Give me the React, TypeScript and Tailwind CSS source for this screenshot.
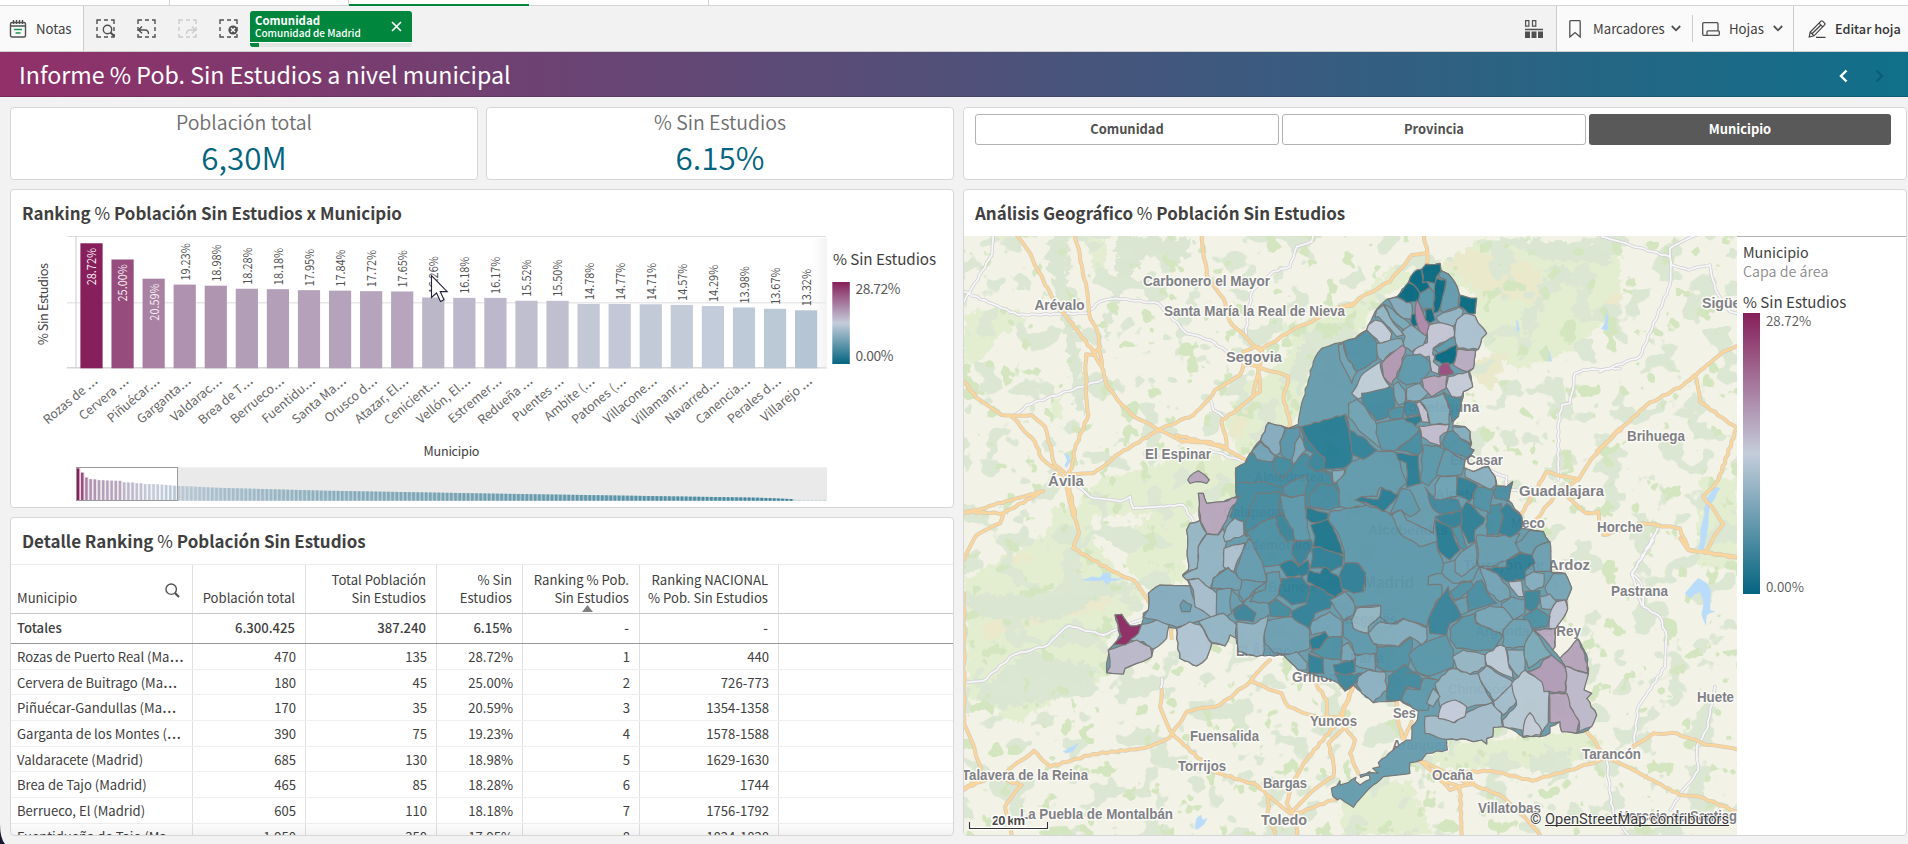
import React from "react";

const SANS = "font-['Noto_Sans_CJK_SC','Open_Sans',sans-serif]";

/* ---------- shared helpers ---------- */

function Label({ text }: { text: string }) {
  const cut = text.endsWith("…");
  return (
    <>
      {cut ? text.slice(0, -1) : text}
      {cut && <span className="font-['Open_Sans'] text-[1.42em] leading-none">…</span>}
    </>
  );
}

const mix = (a: number[], b: number[], t: number) =>
  `rgb(${a.map((v, i) => Math.round(v + (b[i] - v) * t)).join(",")})`;
const LOW = [4, 100, 128];
const MID = [196, 205, 218];
const HIGH = [134, 31, 91];
const scale = (v: number) =>
  v < 14.36 ? mix(LOW, MID, v / 14.36) : mix(MID, HIGH, (v - 14.36) / 14.36);

/* ---------- toolbar ---------- */

const DASH = "M1 5V1h4M8 1h4M15 1h3v4M18 8v4M18 15v3h-3M12 18H8M5 18H1v-3M1 12V8";

function SelIcon({ color, children }: { color: string; children: React.ReactNode }) {
  return (
    <svg width="19" height="19" viewBox="0 0 19 19" fill="none" stroke={color} strokeWidth="1.4">
      <path d={DASH} />
      {children}
    </svg>
  );
}

function Toolbar() {
  return (
    <div className="flex h-[46px] border-b border-[#cfcfcf] bg-[#f2f2f2] text-[13.2px] text-[#404040]">
      <div className="flex w-[84px] items-center border-r border-[#cccccc] bg-[#fafafa] pl-[9px]">
        <svg width="18" height="18" viewBox="0 0 18 18" fill="none" stroke="#505050" strokeWidth="1.4">
          <rect x="1.5" y="2.5" width="15" height="14.5" rx="1.5" />
          <path d="M1.5 6h15M4.5 0v4M7.5 0v4M10.5 0v4M13.5 0v4" />
          <path d="M5 9.5h8M6.500 13h5" stroke="#1a9550" />
        </svg>
        <span className="ml-[9px]">Notas</span>
      </div>
      <div className="flex items-center gap-[22px] pl-[12px]">
        <SelIcon color="#505050">
          <circle cx="11.500" cy="10.500" r="4.200" fill="#f2f2f2" />
          <path d="M14.500 13.500l4 4" strokeWidth="2" />
        </SelIcon>
        <SelIcon color="#505050">
          <path d="M5 7.500L1.500 11 5 14.200M2 11h6c2 0 3.500 1 3.500 4" fill="none" />
        </SelIcon>
        <SelIcon color="#cccccc">
          <path d="M14 7.500L17.500 11 14 14.200M17 11h-5c-2 0-3.500 1-3.500 4" fill="none" />
        </SelIcon>
        <SelIcon color="#505050">
          <circle cx="14" cy="11" r="4.600" fill="#505050" stroke="none" />
          <path d="M12 9l4 4M16 9l-4 4" stroke="#fff" />
        </SelIcon>
      </div>
      <div className="ml-[12px] mt-[5px] flex h-[36px] w-[162px] flex-col overflow-hidden rounded-[3px] bg-[#e2e6e3]">
        <div className="flex h-[31px] items-center justify-between bg-[#00873d] pl-[5px] pr-[10px] text-white">
          <div className="flex flex-col">
            <span className="h-[13px] text-[11.400px] font-bold leading-[13px]">Comunidad</span>
            <span className="h-[12px] text-[10px] font-medium leading-[12px]">Comunidad de Madrid</span>
          </div>
          <svg width="11" height="11" viewBox="0 0 11 11" stroke="#fff" strokeWidth="1.700">
            <path d="M1 1l9 9M10 1l-9 9" />
          </svg>
        </div>
        <div className="h-[1px] bg-white" />
        <div className="h-[4px] w-[9px] bg-[#00873d]" />
      </div>
      <div className="flex-1" />
      <div className="flex w-[31px] items-center">
        <svg width="18" height="18" viewBox="0 0 18 18" fill="#505050">
          <path d="M.6.600h3.300v5.600H.6zM7.500.600h3.300v5.600H7.500z" fill="none" stroke="#505050" strokeWidth="1.200" />
          <path d="M0 8.700h18v1.500H0zM0 11.500h5V18H0zM6.500 11.500h5V18h-5zM13 11.500h5V18h-5z" />
        </svg>
      </div>
      <div className="flex w-[237px] items-center border-l border-[#cccccc] bg-[#fafafa] pl-[12px]">
        <svg width="12" height="18" viewBox="0 0 12 18" fill="none" stroke="#505050" strokeWidth="1.300">
          <path d="M.8 1.500q0-.8.8-.8h8.800q.8 0 .8.800v15.500L6 12.500.8 17z" />
        </svg>
        <span className="ml-[12px] w-[67px]">Marcadores</span>
        <Chevron />
        <div className="ml-[11px] h-[27px] w-px bg-[#cccccc]" />
        <svg className="ml-[9px]" width="18" height="14" viewBox="0 0 18 14" fill="none" stroke="#505050" strokeWidth="1.300">
          <path d="M16 8.500V1.700q0-1-1-1H1.700q-1 0-1 1v10.600q0 1 1 1h12.500M5 13.300V10q0-1.200 1-1.200h10.300q1 0 1 1v2.500q0 1-1 1H5" />
        </svg>
        <span className="ml-[9px] w-[33px]">Hojas</span>
        <Chevron />
      </div>
      <div className="flex w-[115px] items-center border-l border-[#cccccc] bg-[#fafafa] pl-[14px] text-[#333]">
        <svg width="18" height="18" viewBox="0 0 18 18" fill="none" stroke="#404040" strokeWidth="1.200">
          <path d="M1.200 17l1-5L13 1.200q.8-.8 1.600 0l2 2q.8.800 0 1.600L6 15.800zM2.200 12L6 15.800M11 3.200l3.700 3.700M4 13.800L13 5M8 17.300h9.500" />
        </svg>
        <span className="ml-[9px] whitespace-nowrap text-[12.700px] font-medium">Editar hoja</span>
      </div>
    </div>
  );
}

function Chevron() {
  return (
    <svg className="ml-[11px]" width="10" height="7" viewBox="0 0 10 7" fill="none" stroke="#505050" strokeWidth="1.800">
      <path d="M.8 1L5 5.300 9.200 1" />
    </svg>
  );
}

/* ---------- cards ---------- */

function Card({ className = "", children }: { className?: string; children: React.ReactNode }) {
  return <div className={`overflow-hidden rounded-[4px] border border-[#d6d6d6] bg-white ${className}`}>{children}</div>;
}

function Kpi({ title, value }: { title: string; value: string }) {
  return (
    <Card className="flex w-[468px] flex-col items-center">
      <span className="mt-[2px] h-[24px] text-[19.500px] font-[350] leading-[24px] text-[#6e6e6e]">{title}</span>
      <span className="mt-[4px] h-[38px] text-[31.400px] font-[350] leading-[38px] text-[#046480]">{value}</span>
    </Card>
  );
}

function Title({ pre, post }: { pre: string; post: string }) {
  return (
    <h2 className="h-[46px] whitespace-pre pl-[11px] pt-[11px] text-[16.950px] font-bold leading-[24px] text-[#404040]">
      {pre}
      <span className="font-normal">%</span>
      {post}
    </h2>
  );
}

/* ---------- bar chart ---------- */

const BARS: [string, number][] = [
  ["Rozas de …", 28.72], ["Cervera …", 25.0], ["Piñuécar…", 20.59], ["Garganta…", 19.23],
  ["Valdarac…", 18.98], ["Brea de T…", 18.28], ["Berrueco…", 18.18], ["Fuentidu…", 17.95],
  ["Santa Ma…", 17.84], ["Orusco d…", 17.72], ["Atazar, El…", 17.65], ["Cenicient…", 16.26],
  ["Vellón, El…", 16.18], ["Estremer…", 16.17], ["Redueña …", 15.52], ["Puentes …", 15.5],
  ["Ambite (…", 14.78], ["Patones (…", 14.77], ["Villacone…", 14.71], ["Villamanr…", 14.57],
  ["Navarred…", 14.29], ["Canencia…", 13.98], ["Perales d…", 13.67], ["Villarejo …", 13.32],
];

const KNOTS = [[23, 13.3], [33, 11.5], [59, 8.9], [96, 6.5], [146, 3.6], [162, 2.7], [171, 1.3]];
const overview: number[] = Array.from({ length: 179 }, (_, i) => {
  if (i < BARS.length) return BARS[i][1];
  if (i > 170) return 0;
  const k = KNOTS.findIndex((n) => n[0] >= i);
  const [x0, y0] = KNOTS[k - 1];
  const [x1, y1] = KNOTS[k];
  return y0 + ((y1 - y0) * (i - x0)) / (x1 - x0);
});

function BarChart() {
  return (
    <svg width="941" height="271" viewBox="11 236 941 271" fill="#595959">
      <defs>
        <linearGradient id="scale" x1="0" y1="0" x2="0" y2="1">
          <stop offset="0" stopColor="#861f5b" />
          <stop offset=".5" stopColor="#c4cdda" />
          <stop offset="1" stopColor="#046480" />
        </linearGradient>
        <linearGradient id="edge">
          <stop offset="0" stopColor="#eee" stopOpacity="0" />
          <stop offset="1" stopColor="#eee" stopOpacity=".7" />
        </linearGradient>
      </defs>
      <rect x="67" y="236" width="759" height="1" fill="#dedede" />
      <rect x="67" y="302" width="759" height="1.500" fill="#e8e8e8" />
      <rect x="67" y="367" width="760" height="1.500" fill="#d6d6d6" />
      <rect x="75.500" y="236" width="1" height="132" fill="#cccccc" />
      <rect x="812" y="238" width="15" height="130" fill="url(#edge)" />
      {BARS.map(([name, v], i) => {
        const x = 80.4 + i * 31.07;
        const h = v * 4.353;
        const y = 368.3 - h;
        const inside = i < 3;
        const ly = inside ? y + 4.500 + 37.500 : y - 4;
        return (
          <g key={name}>
            <rect x={x} y={y} width="22.200" height={h} fill={scale(v)} />
            <text
              transform={`translate(${x + 16} ${ly}) rotate(-90)`}
              fontSize="12.200"
              textLength="37.300"
              lengthAdjust="spacingAndGlyphs"
              fill={inside ? "#f6eef4" : "#505050"}
            >
              {v.toFixed(2)}%
            </text>
            <text transform={`translate(${x + 18.3} 382) rotate(-40)`} fontSize="12.400" textAnchor="end" fill="#666" xmlSpace="preserve">
              {name.slice(0, -1)}
              <tspan className="font-['Open_Sans'] text-[1.35em]">…</tspan>
            </text>
          </g>
        );
      })}
      <text transform="translate(48 345) rotate(-90)" fontSize="12.800" textLength="82" fill="#404040">% Sin Estudios</text>
      <text x="423.500" y="456" fontSize="12.600" textLength="56" fill="#404040">Municipio</text>
      <rect x="76" y="467.300" width="751" height="33.400" fill="#eaeaea" />
      <rect x="76.500" y="467.500" width="101" height="33" fill="#fff" stroke="#9a9a9a" strokeWidth="1" />
      {overview.map((v, i) => {
        const x = 76.300 + i * 4.194;
        const h = Math.max(v * 1.125, 0.8);
        const c = v === 0 ? "#bfd0d8" : scale(v);
        return (
          <g key={i} fill={c} opacity={i < 24 ? 1 : 0.85}>
            <rect x={x} y={500.700 - h} width="4.194" height={h} opacity={i < 24 ? 0.2 : 0.5} />
            <rect x={x + 0.5} y={500.700 - h} width="2.500" height={h} />
          </g>
        );
      })}
      <path d="M76.500 467.500h101v33h-101z" fill="none" stroke="#9a9a9a" />
      <text x="833" y="265" fontSize="15.200" textLength="103" fill="#404040">% Sin Estudios</text>
      <rect x="832.300" y="282" width="17.500" height="82" fill="url(#scale)" />
      <text x="855.500" y="294" fontSize="13.800" textLength="45">28.72%</text>
      <text x="855.500" y="361" fontSize="13.800" textLength="38">0.00%</text>
      <path d="M431.500 275.500v22l5-4.500 4 8.500 3.500-1.700-3.800-8.200h7z" fill="#fff" stroke="#222238" strokeWidth="1.100" />
    </svg>
  );
}

/* ---------- table ---------- */

const COLS = ["w-[182px]", "w-[113px]", "w-[131px]", "w-[86px]", "w-[117px]", "w-[139px]"];
const HEAD = ["Municipio", "Población total", "Total Población\nSin Estudios", "% Sin\nEstudios", "Ranking % Pob.\nSin Estudios", "Ranking NACIONAL\n% Pob. Sin Estudios"];
const ROWS = [
  ["Rozas de Puerto Real (Ma…", "470", "135", "28.72%", "1", "440"],
  ["Cervera de Buitrago (Ma…", "180", "45", "25.00%", "2", "726-773"],
  ["Piñuécar-Gandullas (Ma…", "170", "35", "20.59%", "3", "1354-1358"],
  ["Garganta de los Montes (…", "390", "75", "19.23%", "4", "1578-1588"],
  ["Valdaracete (Madrid)", "685", "130", "18.98%", "5", "1629-1630"],
  ["Brea de Tajo (Madrid)", "465", "85", "18.28%", "6", "1744"],
  ["Berrueco, El (Madrid)", "605", "110", "18.18%", "7", "1756-1792"],
  ["Fuentidueña de Tajo (Ma…", "1.950", "350", "17.95%", "8", "1824-1828"],
];

function Table() {
  return (
    <div className="relative h-[271px] overflow-hidden border-t border-[#ebebeb] text-[13.100px] text-[#404040]">
      <div className="flex h-[49px] border-b border-[#c8c8c8]">
        {HEAD.map((h, i) => (
          <div key={h} className={`${COLS[i]} relative flex items-end border-r border-[#e0e0e0] pb-[6px] pl-[6px] pr-[10px] ${i ? "justify-end text-right" : ""}`}>
            <span className="whitespace-pre leading-[18px]">{h}</span>
            {i === 0 && (
              <svg className="absolute right-[12px] top-[18px]" width="15" height="15" viewBox="0 0 15 15" fill="none" stroke="#505050">
                <circle cx="6.200" cy="6.200" r="5.200" strokeWidth="1.400" />
                <path d="M10 10l4 4" strokeWidth="2.200" />
              </svg>
            )}
            {i === 4 && (
              <svg className="absolute bottom-px left-[59px]" width="11" height="7" viewBox="0 0 11 7">
                <path d="M5.500 0L11 7H0z" fill="#808080" />
              </svg>
            )}
          </div>
        ))}
      </div>
      <div className="flex h-[30px] border-b border-[#999999] font-medium">
        {["Totales", "6.300.425", "387.240", "6.15%", "-", "-"].map((v, i) => (
          <div key={i} className={`${COLS[i]} border-r border-[#e0e0e0] pl-[6px] pr-[10px] leading-[28px] ${i ? "text-right" : ""}`}>{v}</div>
        ))}
      </div>
      {ROWS.map((r) => (
        <div key={r[0]} className="flex h-[25.700px] border-b border-[#efefef]">
          {r.map((v, i) => (
            <div key={i} className={`${COLS[i]} whitespace-nowrap border-r border-[#e0e0e0] pl-[6px] pr-[9px] leading-[25px] ${i ? "text-right" : ""}`}>
              <Label text={v} />
            </div>
          ))}
        </div>
      ))}
      <div className="absolute inset-x-0 bottom-0 h-[14px] bg-gradient-to-b from-transparent to-black/5" />
    </div>
  );
}

/* ---------- map ---------- */

type Frame = [number, number];
const A: Frame = [0, 0];
const B: Frame = [360, -510];
const C: Frame = [-780, 330];
const D: Frame = [360, 420];
const E: Frame = [-780, -645];
const F: Frame = [1140, -645];

const shift = (f: Frame, s: string) =>
  s.trim().split(/\s+/).map((p) => {
    const [x, y] = p.split(",").map(Number);
    return [x + f[0], y + f[1]];
  });

/* Adds small bends to long edges so borders look surveyed. */
function organic(pts: number[][], closed: boolean) {
  const out: string[] = [];
  const n = pts.length;
  for (let i = 0; i < n; i++) {
    const [x, y] = pts[i];
    out.push(`${x},${y}`);
    if (!closed && i === n - 1) break;
    const [u, v] = pts[(i + 1) % n];
    const len = Math.hypot(u - x, v - y);
    const steps = Math.floor(len / 13);
    const flip = x + y * 3 < u + v * 3 ? 1 : -1;
    for (let k = 1; k < steps; k++) {
      const t = flip > 0 ? k / steps : 1 - k / steps;
      const s = k / steps;
      const w = Math.sin(t * 37 + (x + u) * 0.7 + (y + v) * 0.3) * 2.2;
      out.push(`${(x + (u - x) * s + (w * flip * -(v - y)) / len).toFixed(1)},${(y + (v - y) * s + (w * flip * (u - x)) / len).toFixed(1)}`);
    }
  }
  return `M${out.join("L")}${closed ? "Z" : ""}`;
}

const OUTLINE = [
  ...shift(A, "50,290 47,205 75,190 95,155 122,120 145,68 183,77 205,85 235,73 250,-5 265,-60 280,-115 305,-155 330,-163"),
  ...shift(B, "0,338 45,325 80,300 85,285 105,245 140,208 170,200 205,158 212,140 248,115 258,103 300,100 303,122 325,132 345,158 358,195 375,200 410,205 405,250 385,250 405,258 415,280 440,310 425,325 415,358 407,362 400,415 388,425 395,455 398,470 370,485 370,500 352,560 340,575 338,585 375,590 390,605 395,640 390,655 402,660 390,680 375,690 372,712 400,725 430,712 445,710 465,740 470,768 500,770 518,755 510,785 505,810 545,860"),
  ...shift(A, "905,385 930,388 970,395 988,425 992,480 995,518 1035,520 1055,565 1040,600 1043,625 1025,660 1005,688 1005,740 998,750 1020,775 1075,717 1100,765 1105,820 1092,870 1115,880 1100,895 1130,945 1120,970"),
  ...shift(D, "745,570 710,580 665,575 660,545 630,560 630,580 600,590 550,592 528,575 490,560 460,562 458,590 440,595 440,612 425,600 400,605 380,598 320,598 322,630 260,640 245,660 210,668 210,700 130,710 100,735 40,802 0,775 -8,780 -22,768 -26,745 -10,738 0,722 0,735 25,728 48,712 45,722 60,735 90,718 88,705 62,712 60,705 90,695 80,700 115,700 98,685 120,680 115,668 160,630 200,600 215,600 215,560 232,540 235,515"),
  ...shift(A, "540,900 495,905 460,908 415,870 400,855 375,873 355,850 320,835 265,820 235,810 190,765 135,768"),
  ...shift(C, "850,432 830,400 828,380 810,375 795,408 755,400 740,445 710,468 660,445 650,385 650,355 625,352 620,380 580,418 575,440 530,460 495,475 490,492 440,488 445,420 460,405 480,375 465,315 485,313 510,348 545,343 550,310 565,300 565,250 600,225 690,228 680,205 668,195 685,180 683,110 680,60 690,40 720,32 717,0"),
  ...shift(E, "715,925 730,925 740,955 790,950 840,930"),
];

const REGIONS: [Frame, string, string][] = [
  [A, "#40889e", "50,290 47,205 75,190 90,160 160,185 215,180 255,160 300,205 355,225 370,230 360,320 330,330 260,320 250,350 160,350 80,410 30,350"],
  [A, "#83aabd", "122,120 145,68 183,77 195,85 180,125 180,160 165,167"],
  [A, "#6fa1b4", "95,155 122,125 165,167 158,185 110,178"],
  [A, "#5793a8", "195,85 240,80 240,110 215,185 185,165 180,125"],
  [A, "#7aa7b8", "240,107 258,150 235,175 220,195 215,180 225,130"],
  [A, "#38839a", "240,80 255,105 280,140 315,175 310,208 290,215 262,195 280,160 258,150"],
  [A, "#40889e", "158,185 170,170 215,180 217,205 190,235 165,215"],
  [A, "#4c8fa3", "190,260 255,225 265,245 255,285 215,293 190,280"],
  [A, "#44899f", "265,290 300,250 340,255 360,275 360,320 330,330 270,320"],
  [A, "#40889e", "75,370 110,280 180,275 180,345 120,370 80,410"],
  [A, "#5996aa", "180,285 215,293 255,285 262,385 270,420 225,420 190,340"],
  [A, "#7fabbb", "337,212 375,208 360,250 340,250"],
  [A, "#4b8ea3", "80,395 120,370 165,350 180,400 225,425 215,460 235,500 215,480 175,495 130,500 100,440"],
  [A, "#398398", "165,350 185,340 220,390 225,420 200,425 180,400"],
  [A, "#368198", "225,425 275,420 275,450 240,500 215,460"],
  [A, "#6299ae", "85,415 100,430 130,500 140,545 105,570 70,610 50,560 50,500"],
  [A, "#5c97ab", "140,520 178,515 185,550 175,585 145,610 90,605 105,570 140,545"],
  [A, "#5b97aa", "330,335 440,315 500,335 515,345 540,400 600,440 650,425 655,455 670,490 665,520 625,530 625,555 665,555 665,590 645,610 625,660 620,680 550,655 510,675 480,650 480,615 395,625 400,600 370,575 435,570 435,520 415,490 372,488 372,450 355,400 325,360"],
  [A, "#5f99ac", "410,180 460,150 530,158 560,250 540,265 530,285 500,275 480,262 470,290 430,290 410,300 440,315 380,325 360,320 358,270 350,245 375,220 385,190"],
  [A, "#5b97aa", "520,320 545,265 570,270 585,300 600,330 570,350 540,330 510,345"],
  [A, "#247a92", "405,300 425,290 475,298 485,262 535,285 520,305 490,335 470,320 440,308"],
  [A, "#237a92", "245,80 375,43 400,150 395,185 370,205 310,208 315,175 280,140 255,105"],
  [A, "#2f8097", "378,45 388,90 440,120 470,150 430,178 398,165 390,110"],
  [A, "#1f768e", "260,322 325,340 322,360 275,368 258,355"],
  [A, "#1c748c", "272,375 325,358 350,405 372,465 280,440 285,410"],
  [A, "#2b7d95", "275,445 300,440 370,470 368,498 330,515 320,505 270,505 278,470"],
  [A, "#1d758e", "267,510 300,520 312,500 360,535 368,575 345,593 300,565 262,545"],
  [A, "#2c7e95", "375,490 415,490 437,520 430,575 400,580 365,565 358,525"],
  [A, "#267b92", "178,495 215,480 235,500 265,480 265,520 245,530 240,525 200,530"],
  [A, "#2f8097", "185,535 245,530 268,560 268,605 215,615 175,585"],
  [A, "#2f8097", "270,555 300,565 345,595 330,625 285,640 268,690 215,655 215,635 260,612"],
  [A, "#6a9eb2", "330,600 375,575 405,615 400,645 370,660 345,625"],
  [A, "#40889e", "145,610 170,598 215,630 205,652 150,648"],
  [A, "#38839a", "38,630 70,612 108,640 100,665 50,660"],
  [A, "#6a9eb2", "135,665 215,650 270,690 270,745 215,765 160,758 135,730"],
  [A, "#8db1c2", "50,665 100,672 145,645 135,690 130,765 110,770 55,755"],
  [A, "#6fa1b4", "275,665 330,635 365,660 365,710 320,712 315,695 275,705 270,685"],
  [A, "#227991", "268,720 300,705 315,695 325,710 300,745 275,748"],
  [A, "#78a6b8", "190,765 230,755 262,790 260,810 235,810"],
  [A, "#4b8ea3", "325,712 365,712 365,780 310,775 270,755 300,745"],
  [A, "#2d7f96", "265,760 310,775 312,820 265,820"],
  [A, "#74a4b6", "365,740 385,727 410,770 400,785 362,783"],
  [A, "#5b97aa", "370,665 395,655 400,685 445,700 460,730 475,740 467,765 405,765 395,730 370,710"],
  [A, "#6fa1b4", "405,765 465,760 467,815 405,795"],
  [A, "#2d7f96", "340,795 400,780 405,815 375,825 345,815"],
  [A, "#3b859b", "345,820 375,825 430,820 405,850 375,873 357,850"],
  [A, "#89afc0", "415,830 445,810 495,815 500,870 460,908 425,880 410,855"],
  [A, "#4c8fa3", "470,740 540,740 575,710 575,750 560,820 500,815 470,800"],
  [A, "#3f879d", "505,830 555,793 605,835 600,870 560,860 545,900 500,900"],
  [A, "#5b97aa", "545,900 560,865 600,870 610,835 655,840 625,930 590,930"],
  [A, "#5695a8", "565,765 600,735 680,705 700,750 700,800 620,830 590,815"],
  [A, "#90b4c2", "395,660 410,625 482,617 480,650 445,680 445,700 400,685"],
  [A, "#80aabb", "445,700 480,665 530,672 550,657 620,683 622,715 605,735 570,710 535,740 460,730"],
  [A, "#3c859b", "615,262 640,290 690,295 715,300 730,335 660,342 638,325"],
  [A, "#307f96", "665,345 725,333 725,370 705,395 645,350"],
  [A, "#2b7d94", "725,330 740,305 795,355 790,370 765,390 765,425 745,430 725,390"],
  [A, "#247a92", "645,360 690,380 720,450 690,480 655,450"],
  [A, "#4c8fa3", "695,385 720,375 735,430 745,450 720,445"],
  [A, "#649bae", "770,405 830,410 900,400 885,430 905,455 870,475 815,500 775,500"],
  [A, "#6a9eb2", "720,460 768,425 770,495 725,530 705,515 705,480"],
  [A, "#438aa0", "800,350 810,315 845,310 850,350 835,405 800,405"],
  [A, "#307f96", "840,330 860,310 905,350 905,385 870,412 835,400 850,350"],
  [A, "#649bae", "888,430 905,420 930,390 970,395 988,425 950,440 935,465 900,455"],
  [A, "#699db1", "950,440 990,425 992,515 945,515 935,470"],
  [A, "#2b7d94", "800,505 860,500 860,480 900,460 935,465 945,490 915,515 920,535 860,545 830,520"],
  [A, "#82abbd", "915,530 940,515 972,520 970,560 935,575 915,555"],
  [A, "#6fa1b4", "780,500 830,520 870,570 870,595 840,605 800,570"],
  [A, "#b3c3d2", "865,545 905,542 912,590 895,590 870,560"],
  [A, "#73a4b6", "975,560 1000,520 1035,520 1055,565 1040,600 1000,600 978,575"],
  [A, "#398499", "915,575 960,572 960,605 945,635 915,625"],
  [A, "#87aec0", "960,590 990,582 1010,605 995,628 965,625"],
  [A, "#c0c5d6", "1010,605 1035,600 1043,625 1025,660 1005,688 987,685 990,640"],
  [A, "#4b8ea3", "910,650 950,625 990,650 980,680 940,685 912,670"],
  [A, "#6a9eb2", "845,610 875,590 915,600 915,640 880,660 845,630"],
  [A, "#468ba1", "740,575 770,545 785,540 800,575 830,610 745,635"],
  [A, "#4e90a4", "690,575 720,550 755,545 760,560 720,595 700,600"],
  [A, "#348198", "625,655 655,600 685,560 690,590 700,605 725,650 690,670 680,705 630,700"],
  [A, "#5695a8", "690,685 730,650 765,640 768,670 850,705 820,750 780,752 710,745 690,720"],
  [A, "#73a4b6", "768,635 810,618 850,622 880,660 855,690 850,705 795,680 768,665"],
  [A, "#699fb1", "850,690 880,658 925,660 938,690 912,740 850,745"],
  [A, "#b8a9bf", "943,690 1005,685 1005,740 998,750 975,720"],
  [A, "#78a8b6", "940,690 995,765 960,780 925,805 912,770 915,730"],
  [A, "#8fb2c3", "860,750 912,750 915,815 895,830 865,790"],
  [A, "#bbc9d7", "795,765 840,735 855,740 865,790 885,840 800,795"],
  [A, "#93b4c4", "697,770 730,750 795,765 797,800 750,823 710,805"],
  [A, "#90b3c3", "645,850 685,810 700,805 750,823 775,820 785,850 820,908 730,925 720,905 660,920 655,880"],
  [A, "#97b7c7", "775,820 800,797 880,848 870,890 825,905 790,855"],
  [A, "#a1bbcb", "820,905 878,850 890,905 850,945 825,925"],
  [D, "#a2bccb", "255,530 300,530 345,548 385,515 455,488 485,520 488,560 460,562 458,590 440,595 440,612 425,600 400,605 380,598 320,598 255,580"],
  [A, "#c3cad9", "655,955 665,915 705,900 740,920 735,950 700,968"],
  [A, "#8fb2c3", "620,910 640,865 660,890 640,920"],
  [D, "#b7c7d3", "515,430 555,390 610,425 628,460 625,550 600,590 550,592 545,570 490,560 488,540 530,495"],
  [D, "#c5cad9", "548,590 555,540 570,518 605,570 600,585"],
  [D, "#b09ab5", "563,395 600,380 610,360 635,345 670,375 680,400 675,458 612,455 605,425"],
  [D, "#b5a2ba", "660,355 712,297 735,345 745,400 705,390 675,378"],
  [D, "#bcb8cb", "675,378 745,402 732,450 755,460 740,475 770,525 755,560 715,577 718,550 690,500 677,458 680,400"],
  [D, "#b5a3bb", "628,460 680,460 690,500 718,545 710,580 665,575 660,545 630,548"],
  [B, "#4f8fa4", "10,335 50,325 85,300 110,340 110,390 50,425 20,380"],
  [B, "#6da1b3", "-5,345 10,340 20,380 50,425 35,460 0,390"],
  [B, "#c0ccd9", "85,285 105,270 125,275 155,310 150,335 120,340 95,315 80,300"],
  [B, "#91b4c4", "110,240 130,225 150,262 190,315 170,320 150,295 115,260 105,262"],
  [B, "#75a7b8", "130,222 160,240 212,285 205,308 185,295 150,262"],
  [B, "#82a9bc", "145,208 175,203 215,220 215,268 190,265 160,235"],
  [B, "#046780", "172,200 205,158 222,165 240,190 235,215 200,218"],
  [B, "#046780", "212,140 230,120 245,118 250,150 262,157 270,172 240,190 222,165 207,155"],
  [B, "#046780", "258,103 300,100 303,122 290,140 285,160 262,155 248,158 250,140 245,118"],
  [B, "#629aae", "303,122 325,132 345,158 358,195 355,230 310,248 300,240 318,150 295,140"],
  [B, "#046780", "290,145 318,150 308,200 295,245 280,250 283,190 285,160"],
  [B, "#5695a8", "240,190 270,172 283,190 280,235 255,235 250,250 240,225 235,215"],
  [B, "#046780", "360,195 375,200 410,205 405,252 385,250 370,235 357,230"],
  [B, "#046780", "215,255 228,250 235,285 220,290 212,275"],
  [B, "#ac87a8", "230,210 240,225 255,265 268,285 260,318 240,305 228,270 225,235"],
  [B, "#046780", "257,238 275,235 285,270 270,280 257,270"],
  [B, "#8fb2c3", "290,260 310,248 357,232 370,240 365,262 340,290 305,283 290,268"],
  [B, "#a9c0cf", "350,270 375,250 405,258 415,280 440,310 425,325 415,358 355,355 345,330 345,300"],
  [B, "#c2c4d5", "268,285 300,278 340,290 343,320 300,340 280,355 278,372 285,380 280,395 298,410 295,432 275,425 270,400 268,378 240,385 218,370 235,345 262,338 262,305"],
  [B, "#85adbf", "215,285 235,300 260,318 250,345 215,365 190,350 195,320 185,305"],
  [B, "#82abbd", "110,340 185,325 192,345 150,370 130,395 115,385"],
  [B, "#5b97aa", "200,375 240,372 270,395 272,420 240,460 200,465 172,445 185,400"],
  [B, "#b197b3", "188,345 197,355 180,415 155,465 130,440 125,400 150,375"],
  [B, "#5b97aa", "280,355 343,320 348,345 310,365 295,370"],
  [B, "#046780", "285,375 315,362 350,345 352,380 340,400 310,405 285,390"],
  [B, "#b7abc0", "352,358 407,362 400,415 380,425 340,405 348,380"],
  [B, "#c3cad8", "325,440 385,425 395,455 398,470 370,485 365,500 335,500 318,470"],
  [B, "#994b7d", "298,412 310,400 325,398 342,430 325,435 310,440 297,435"],
  [B, "#b5a3bb", "245,447 270,440 322,437 318,475 275,500 250,475"],
  [B, "#bdccd6", "120,395 130,440 150,470 105,490 55,507 35,490 70,430"],
  [B, "#40889e", "65,490 150,470 165,480 165,525 145,560 110,572 80,540 68,520"],
  [B, "#74a4b6", "160,465 175,455 195,480 195,520 175,525 163,500"],
  [B, "#82abbd", "200,475 240,460 265,490 240,512 200,510"],
  [B, "#438aa0", "310,485 335,500 365,505 355,560 335,575 325,520"],
  [B, "#7facbd", "240,512 310,490 330,540 328,582 270,582 262,545"],
  [B, "#40889e", "195,515 228,518 240,555 200,560 190,540"],
  [B, "#c0c0d0", "228,520 240,515 262,545 268,578 245,575 240,555"],
  [B, "#257b93", "195,565 240,556 245,572 225,590 200,582"],
  [B, "#4c8fa3", "145,540 190,530 190,562 150,567"],
  [B, "#6ea1b3", "25,520 50,508 65,520 105,572 115,600 125,655 55,600 25,560"],
  [B, "#5896a9", "110,580 190,565 240,595 220,620 165,663 125,660 108,610"],
  [B, "#c0bbcd", "237,588 328,583 322,605 300,620 302,648 270,638 245,620"],
  [B, "#82abbd", "338,590 375,590 390,605 392,642 360,625 340,605"],
  [B, "#4f90a4", "325,605 340,603 365,630 392,645 390,655 402,660 380,685 315,655 305,640"],
  [B, "#438aa0", "170,660 220,620 240,600 248,660 235,675"],
  [B, "#267b93", "168,670 235,675 243,760 200,772 200,700 175,690"],
  [B, "#5896a9", "248,645 300,650 315,660 290,740 265,768 243,755"],
  [B, "#5d98ab", "315,657 375,690 365,735 310,740 290,735"],
  [B, "#87aec0", "375,715 400,725 430,712 445,710 465,740 468,765 450,780 375,740"],
  [B, "#6ba1b3", "285,765 300,740 350,737 352,800 282,808"],
  [B, "#2d7e95", "352,740 370,745 412,765 390,815 350,795"],
  [B, "#4c8fa3", "400,790 412,770 460,780 450,850 400,830"],
  [B, "#468ba1", "470,768 500,770 518,755 510,785 505,815 465,805 460,785"],
  [C, "#82aabd", "565,250 600,225 690,228 700,265 768,330 710,335 650,352 550,320 565,300"],
  [C, "#6099ad", "660,285 670,270 695,285 690,305 665,305"],
  [C, "#94b5c5", "680,60 690,40 720,32 740,70 715,110 715,170 668,195 685,180 683,110"],
  [C, "#8fb2c3", "740,72 775,75 790,55 800,95 790,130 800,170 760,205 750,235 705,205 680,210 668,198 712,175 715,110"],
  [C, "#97b7c7", "800,50 825,25 850,35 852,75 795,95 790,80"],
  [C, "#abbfce", "792,115 855,98 822,185 790,170"],
  [C, "#699db1", "760,205 805,172 845,210 840,240 780,235 755,235"],
  [C, "#a5bccc", "685,210 715,205 770,250 768,330 705,290 700,240"],
  [C, "#6fa1b4", "770,240 815,235 810,265 815,310 770,330"],
  [C, "#afc3d1", "650,355 690,335 720,345 755,400 740,445 710,468 660,445 650,385"],
  [C, "#91b3c4", "715,335 790,310 830,345 828,385 810,375 795,408 755,398"],
  [C, "#97b7c7", "510,390 545,343 590,330 627,345 620,385 580,418 550,395"],
  [C, "#bab6ca", "445,420 530,390 570,410 575,440 530,460 495,475 490,492 440,488 450,470"],
  [C, "#8a2861", "465,315 485,313 510,348 545,343 535,370 495,405 460,405 485,380 475,345"],
  [E, "#b7a5bc", "715,925 730,925 740,955 790,950 842,932 810,975 800,1005 775,1047 740,1045 722,1010 717,975"],
  [E, "#b7a5bc", "683,885 700,865 715,857 735,870 748,885 740,895 720,890 690,895"],
];

const BORDERS: [Frame, string][] = [
  [A, "515,345 545,330 560,360 640,400 648,350"],
  [A, "50,250 120,245 190,260"],
  [A, "350,245 340,250 330,225 300,210"],
  [A, "665,520 700,550 760,540 780,500"],
  [A, "670,490 705,480"],
  [A, "700,605 740,590 745,635 725,645"],
  [A, "560,820 590,815 645,840"],
  [C, "845,210 920,215 915,240 885,250 850,280"],
  [C, "815,235 850,280 820,310"],
];

const ORANGE: [Frame, string][] = [
  [E, "170,150 215,215 255,300 290,355 320,395 400,500 425,545 445,610 510,685 595,735 665,770 740,770 790,785 860,825"],
  [E, "345,150 365,240 380,310 388,390 415,450 425,545"],
  [E, "420,485 400,510 378,508 378,600 385,690 365,740 345,790 335,850 320,870"],
  [E, "12,590 50,640 125,690 215,690 255,725 265,770 275,800 285,840 320,870 345,990"],
  [E, "155,695 225,770 245,820 285,850"],
  [E, "320,870 400,865 480,805 595,735 700,690 740,650 765,615 840,570 850,540 895,545 985,575 970,640 985,690 990,720 965,760"],
  [E, "725,150 735,230 740,270 790,340 810,410 880,480 900,495 990,440 1080,395 1190,350"],
  [E, "850,540 850,500 885,485 905,490 900,540 880,625"],
  [E, "895,545 900,620 830,675 785,705 800,780 800,790 650,750"],
  [E, "12,985 100,960 250,918 130,985"],
  [E, "290,860 310,885 340,980"],
  [B, "250,0 262,70 260,100"],
  [B, "-15,235 35,228 65,200 150,155 215,75 262,68"],
  [C, "0,5 130,10 120,40 50,75 12,150"],
  [C, "335,0 358,70 340,115 460,185 520,210 565,275"],
  [C, "12,250 12,640 45,720 65,790 12,840"],
  [C, "12,835 140,785 222,722 270,770 400,732 550,715 630,682 680,605 780,585 870,515 930,450"],
  [C, "870,515 965,550 985,590 1080,625 1150,618"],
  [C, "605,540 600,590 635,670 760,785 890,825 930,860 990,910 1050,850 1120,800 1120,760 1105,700 1170,640"],
  [C, "1000,915 1130,865"],
  [C, "925,860 925,920 945,970"],
  [C, "1010,975 1010,920 980,880 990,830 1030,760 1130,640 1180,530"],
  [C, "65,790 185,825 135,890 155,975"],
  [C, "1070,525 1100,570 1100,620"],
  [C, "635,352 635,385"],
  [D, "170,485 175,545 190,600 215,545"],
  [D, "40,440 0,540 45,600 30,640 55,700"],
  [D, "235,660 300,720 360,740 365,885"],
  [D, "250,665 320,700 455,692 575,722 690,690 800,655 880,690 1020,765 1080,770 1190,815"],
  [D, "360,720 480,765 540,820 600,885"],
  [D, "300,720 330,750 400,730 380,700"],
  [D, "735,565 800,655"],
  [D, "880,620 940,580 1010,580 1100,615 1190,628"],
  [D, "1020,-5 1045,30 1190,50"],
  [B, "840,595 760,680 715,750 620,725 545,850"],
  [B, "715,745 650,790 580,880"],
  [B, "680,795 740,850 775,845 780,900"],
  [F, "-10,800 140,660 250,600 370,500 415,480"],
  [F, "285,570 300,650 410,730 355,885 310,935 370,1015 315,1100"],
  [F, "10,1050 130,1015 240,1030 265,1095 360,1110 415,1120"],
];

const WHITE: [Frame, string][] = [
  [E, "100,150 95,210 30,320 12,350"],
  [E, "12,320 175,390 380,385 420,350 470,340 595,355 680,445 750,465 800,500"],
  [E, "165,690 200,660 440,580"],
  [E, "855,460 875,320 940,260 990,245 1010,185 1055,170 1060,150"],
  [E, "345,900 400,940 480,950 510,935 520,970 670,960 700,1010"],
  [E, "750,640 760,675 790,695"],
  [E, "750,795 850,830"],
  [C, "12,518 70,512 160,435 265,405 325,347 430,375 550,325"],
  [C, "605,505 605,560"],
  [B, "840,415 730,420 705,430 690,520 665,525 655,580 655,750"],
  [B, "430,715 500,740 500,775 580,785"],
  [F, "5,155 90,180 210,215 210,300 120,515 0,560"],
  [F, "290,150 210,190 215,240 265,255 330,240 345,310 390,380 410,385"],
  [F, "180,1020 95,1170 125,1260"],
  [D, "940,0 875,100 905,130 910,200 960,230 980,290 975,380 895,500 880,620"],
  [D, "1125,440 1100,570 1070,620 1075,690 1020,765 990,810"],
  [D, "800,655 810,760 820,820 865,885"],
];

const GREENS: [Frame, string][] = [
  [E, "12,400 60,370 150,365 200,400 110,460 60,530 12,545"],
  [E, "120,150 180,150 170,190 130,195"],
  [E, "370,150 440,170 435,265 400,250 385,200"],
  [E, "850,590 930,560 1000,480 950,420 1080,400 1200,370 1200,450 1060,520 1020,700 850,820 790,720"],
  [E, "270,650 310,620 305,700 275,710"],
  [E, "440,880 560,850 700,800 850,830 830,930 720,990 330,990 400,900"],
  [B, "260,130 420,30 840,60 840,230 700,360 540,420 430,350 400,190"],
  [B, "0,250 170,100 230,150 100,220 60,320 0,335"],
  [C, "12,210 270,60 270,-10 390,0 400,90 470,180 560,260 440,400 460,490 300,560 170,640 20,560"],
  [C, "500,70 600,0 690,10 670,220 570,220 500,190"],
  [D, "320,610 600,590 740,570 790,610 690,680 330,690 260,660"],
  [D, "0,740 110,730 210,720 280,885 10,885"],
  [F, "300,880 415,880 415,1160 290,1140"],
];
const SCRUB: [Frame, string][] = [
  [E, "280,150 330,150 320,300 360,520 375,690 345,660 320,480 280,300 255,220"],
  [E, "470,150 700,160 680,220 620,240 560,210 520,260 470,360 440,470 430,420 465,300"],
  [E, "1040,440 1180,400 1190,450 1070,510 1020,640 990,560"],
  [B, "480,20 840,50 800,110 720,100 620,90 540,60"],
  [B, "640,100 720,130 620,200 560,330 540,250 590,220"],
  [C, "12,260 280,250 420,200 560,240 400,270 300,330 200,330 40,320"],
  [C, "200,420 430,480 300,560 120,600 40,560 130,480"],
  [D, "560,650 700,620 680,680 570,700"],
];
const SAND: [Frame, string][] = [
  [B, "310,100 380,60 520,80 610,130 600,230 500,200 420,190 350,130"],
  [B, "420,380 500,370 460,480 400,450"],
  [C, "70,340 260,280 400,250 470,280 380,310 200,350 70,395"],
  [C, "130,140 200,130 210,155 140,165"],
  [E, "800,740 850,680 900,640 830,770"],
  [F, "20,340 70,320 60,390 20,375"],
];
const WATER: [Frame, string][] = [
  [C, "365,210 395,200 420,203 430,190 450,190 452,205 490,205 450,213 440,225 430,210 400,212"],
  [C, "310,725 325,715 355,700 340,722 320,730"],
  [C, "705,955 710,925 722,915 728,930 742,925 730,945 712,958"],
  [E, "312,805 328,812 330,828 320,848 314,842 322,826"],
  [B, "785,297 797,290 800,250 805,300"],
  [B, "624,360 630,370 635,395 628,392"],
  [B, "528,270 534,275 538,300 530,305"],
  [D, "1035,160 1060,130 1075,115 1085,120 1100,130 1112,150 1110,210 1125,215 1100,225 1098,255 1085,220 1090,180 1080,155 1050,175"],
  [F, "345,905 360,910 345,940 330,960 325,1010 310,1095 295,1090 310,1000 320,940"],
  [F, "5,430 18,410 20,370 25,400 22,432"],
];

const PLACES: [string, number, number, number, number][] = [
  ["Arévalo", 1034.5, 310, 14, 50], ["Carbonero el Mayor", 1143, 285.5, 14, 127],
  ["Santa María la Real de Nieva", 1164, 316, 14, 181], ["Segovia", 1226, 361.500, 15, 56],
  ["El Espinar", 1145, 459, 14, 66], ["Ávila", 1048, 486, 15, 36],
  ["Torrelaguna", 1401, 411.500, 14, 78], ["El Casar", 1450, 464.500, 14, 53],
  ["Guadalajara", 1519, 496, 15, 85], ["Meco", 1511, 527.500, 14, 34],
  ["Horche", 1597, 532, 14, 46], ["Brihuega", 1627, 441, 14, 58],
  ["Sigüenza", 1702, 308, 14, 62], ["Pastrana", 1611, 595.500, 14, 57],
  ["Almedratea", 1254, 482, 14, 70], ["Galapagar", 1223, 517, 14, 64], ["Valdemorillo", 1232, 550, 14, 78],
  ["Alcobendas", 1368, 535, 15, 80], ["Algete", 1435, 499, 14, 42], ["Madrid", 1363, 588, 16, 51],
  ["Brunete", 1268, 592, 14, 50], ["Leganés", 1345, 624, 14, 52], ["Parla", 1350, 663, 14, 34],
  ["Torrejón de Ardoz", 1463, 569.500, 15, 127], ["Arganda del Rey", 1475, 636, 15, 106],
  ["Chinchón", 1448, 694, 14, 60], ["El Álamo", 1236, 656, 14, 55], ["Griñón", 1292, 682, 14, 45],
  ["Yuncos", 1310, 726, 14, 47], ["Ses", 1393, 718, 14, 23], ["Aranjuez", 1392, 750, 14, 56],
  ["Fuensalida", 1190, 740.500, 14, 69], ["Torrijos", 1178, 771, 14, 48], ["Bargas", 1263, 788, 14, 44],
  ["Toledo", 1261, 825, 15, 46], ["Talavera de la Reina", 962, 780, 14, 126],
  ["La Puebla de Montalbán", 1020, 819, 14, 153], ["Ocaña", 1432, 780, 14, 41],
  ["Villatobas", 1478, 813, 14, 63], ["Tarancón", 1582, 758.500, 14, 59], ["Huete", 1697, 702, 14, 37],
  ["Horcajo de Santiago", 1619, 821, 14, 126],
];

const draw = (list: [Frame, string][], closed = false) =>
  list.map(([f, s]) => organic(shift(f, s), closed)).join("");

function MapView() {
  const orange = draw(ORANGE);
  const white = draw(WHITE);
  return (
    <svg width="773" height="599" viewBox="964 236 773 599" className="block">
      <defs>
        <filter id="veg" x="0" y="0" width="100%" height="100%" colorInterpolationFilters="sRGB">
          <feTurbulence type="fractalNoise" baseFrequency="0.035 0.04" numOctaves="3" seed="11" />
          <feColorMatrix values="0 0 0 0 .862  0 0 0 0 .906  0 0 0 0 .827  30 0 0 0 -17.4" />
        </filter>
        <filter id="veg2" x="0" y="0" width="100%" height="100%" colorInterpolationFilters="sRGB">
          <feTurbulence type="fractalNoise" baseFrequency="0.05" numOctaves="3" seed="42" />
          <feColorMatrix values="0 0 0 0 .83  0 0 0 0 .9  0 0 0 0 .75  0 30 0 0 -19.8" />
        </filter>
        <filter id="rough" x="-5%" y="-5%" width="110%" height="110%" colorInterpolationFilters="sRGB">
          <feTurbulence type="fractalNoise" baseFrequency="0.05" numOctaves="3" seed="5" />
          <feDisplacementMap in="SourceGraphic" scale="40" xChannelSelector="R" yChannelSelector="G" />
        </filter>
      </defs>
      <rect x="964" y="236" width="773" height="600" fill="#f2f2e6" />
      <g transform="translate(1220 400) scale(.33333)" filter="url(#rough)">
        <path d={draw(GREENS, true)} fill="#e3eed1" />
        <path d={draw(SAND, true)} fill="#ebe9cc" />
        <path d={draw(SCRUB, true)} fill="#dae6d2" />
      </g>
      <rect x="964" y="236" width="773" height="600" filter="url(#veg)" />
      <rect x="964" y="236" width="773" height="600" filter="url(#veg2)" />
      <g transform="translate(1220 400) scale(.33333)" fill="none" strokeLinejoin="round" strokeLinecap="round">
        <path d={draw(WATER, true)} fill="#b9dcfa" stroke="#b9dcfa" strokeWidth="1" />
        <path d={white} stroke="#cfcfd2" strokeWidth="10" />
        <path d={white} stroke="#f7f7fa" strokeWidth="5.500" />
        <path d={orange} stroke="#d5cbb9" strokeWidth="12" />
        <path d={orange} stroke="#fad59c" strokeWidth="8" />
      </g>
      <g className="font-['Liberation_Sans',Arial,sans-serif] font-bold" fill="#808086" stroke="#fbfbf6" strokeWidth="3" strokeLinejoin="round" paintOrder="stroke">
        {PLACES.map(([n, x, y, s, w]) => (
          <text key={n} x={x} y={y} fontSize={s} textLength={w} lengthAdjust="spacingAndGlyphs">{n}</text>
        ))}
      </g>
      <g transform="translate(1220 400) scale(.33333)" opacity=".95" stroke="#737373" strokeWidth="3.600" strokeLinejoin="round">
        <path d={organic(OUTLINE, true)} fill="#649bae" />
        {REGIONS.map(([f, c, s], i) => (
          <path key={i} d={organic(shift(f, s), true)} fill={c} />
        ))}
        <path d={draw(BORDERS)} fill="none" />
      </g>
      <g className="font-['Liberation_Sans',Arial,sans-serif]">
        <path d="M969.500 822v6.500h78V822" fill="none" stroke="#fff" strokeWidth="3.500" />
        <path d="M969.500 822v6.500h78V822" fill="none" stroke="#333" strokeWidth="1.200" />
        <text x="992" y="825" fontSize="13" textLength="33" className="font-bold" fill="#4a4a4a" stroke="#fff" strokeWidth="3" paintOrder="stroke">20 km</text>
      </g>
      <g fill="#3a3a3a" stroke="#ffffff" strokeOpacity=".8" strokeWidth="2" paintOrder="stroke" fontSize="14.500" className="font-['Roboto',sans-serif]">
        <text x="1530" y="823.500">©</text>
        <text x="1545" y="823.500" textLength="184" lengthAdjust="spacingAndGlyphs">OpenStreetMap contributors</text>
      </g>
      <rect x="1545" y="825" width="184" height="1" fill="#333" />
    </svg>
  );
}

function MapLegend() {
  return (
    <div className="flex w-[169px] flex-col border-t border-[#b3b3b3] pl-[6px] pt-[5px] text-[#404040]">
      <span className="h-[19px] text-[14.300px] leading-[20px]">Municipio</span>
      <span className="h-[19px] text-[14.300px] font-[350] leading-[20px] text-[#8c8c8c]">Capa de área</span>
      <span className="mt-[10px] h-[20px] text-[15.100px] leading-[22px]">% Sin Estudios</span>
      <div className="mt-[3px] flex">
        <div className="h-[281px] w-[17px] bg-[linear-gradient(#861f5b,#c4cdda_50%,#046480)]" />
        <div className="flex flex-col justify-between pb-px pl-[6px] text-[13.400px] font-[350] leading-[14px] text-[#595959]">
          <span>28.72%</span>
          <span>0.00%</span>
        </div>
      </div>
    </div>
  );
}

/* ---------- page ---------- */

export default function App() {
  return (
    <div className={`relative flex h-[844px] w-[1908px] flex-col overflow-hidden bg-[#f2f2f2] ${SANS}`}>
      <div className="flex h-[6px] bg-white">
        <div className="w-[170px] border-b border-r border-[#d4d4d4]" />
        <div className="w-[179px] border-b border-r border-[#d4d4d4]" />
        <div className="w-[180px] border-b-2 border-[#00873d]" />
        <div className="w-[180px] border-b border-r border-[#d4d4d4]" />
        <div className="flex-1 border-b border-[#d4d4d4]" />
      </div>
      <Toolbar />
      <div className="flex h-[45px] items-center justify-between bg-[linear-gradient(90deg,#913069,#10708a)] pl-[19px] pr-[24px] shadow-[inset_0_-1px_0_rgba(0,0,0,.15)]">
        <h1 className="whitespace-nowrap pb-[2px] text-[23.200px] leading-[40px] text-white">Informe % Pob. Sin Estudios a nivel municipal</h1>
        <div className="flex items-center gap-[27px] pt-[2px]">
          <svg width="9" height="14" viewBox="0 0 9 14" fill="none" stroke="#fff" strokeWidth="2.400"><path d="M7.500 1.500L2 7l5.500 5.500" /></svg>
          <svg width="9" height="14" viewBox="0 0 9 14" fill="none" stroke="#0d5d78" strokeWidth="2.400"><path d="M1.500 1.500L7 7l-5.500 5.500" /></svg>
        </div>
      </div>
      <div className="flex gap-[9px] pl-[10px] pr-px pt-[10px]">
        <div className="flex w-[944px] flex-col gap-[9px]">
          <div className="flex h-[73px] justify-between">
            <Kpi title="Población total" value="6,30M" />
            <Kpi title="% Sin Estudios" value="6.15%" />
          </div>
          <Card className="h-[319px]">
            <Title pre="Ranking " post=" Población Sin Estudios x Municipio" />
            <BarChart />
          </Card>
          <Card className="h-[319px]">
            <Title pre="Detalle Ranking " post=" Población Sin Estudios" />
            <Table />
          </Card>
        </div>
        <div className="flex w-[944px] flex-col gap-[9px]">
          <Card className="flex h-[73px] gap-[3px] pl-[11px] pr-[15px] pt-[6px] text-[12.900px] font-bold text-[#505050]">
            <div className="h-[31px] flex-1 rounded-[3px] border border-[#b3b3b3] text-center leading-[28px]">Comunidad</div>
            <div className="h-[31px] flex-1 rounded-[3px] border border-[#b3b3b3] text-center leading-[28px]">Provincia</div>
            <div className="h-[31px] flex-1 rounded-[3px] bg-[#595959] text-center leading-[30px] text-white">Municipio</div>
          </Card>
          <Card className="h-[647px]">
            <Title pre="Análisis Geográfico " post=" Población Sin Estudios" />
            <div className="flex h-[600px]">
              <MapView />
              <MapLegend />
            </div>
          </Card>
        </div>
      </div>
      <svg className="absolute bottom-0 left-0" width="5" height="20" viewBox="0 0 5 20"><path d="M0 0Q0 14 5 20H0z" fill="#1a1a2e" /></svg>
    </div>
  );
}
